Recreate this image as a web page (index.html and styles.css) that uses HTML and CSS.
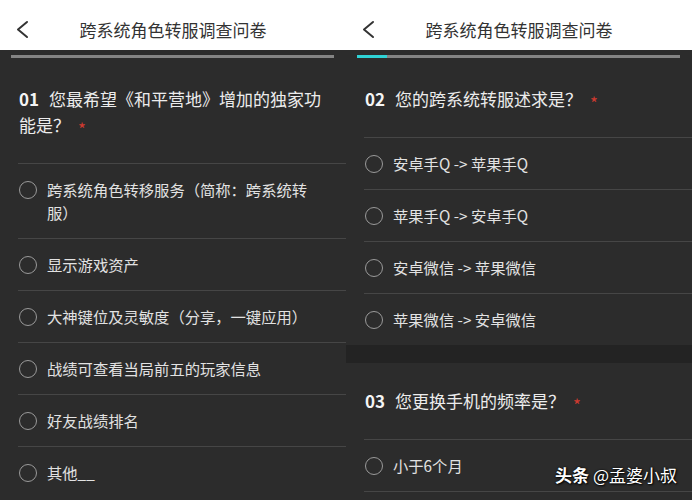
FILE: index.html
```html
<!DOCTYPE html>
<html lang="zh-CN">
<head>
<meta charset="utf-8">
<title>跨系统角色转服调查问卷</title>
<link rel="stylesheet" href="styles.css">
</head>
<body>
<div class="screens">
  <section class="panel">
    <header class="topbar">
      <svg class="back" width="14" height="20" viewBox="0 0 14 20"><polyline points="11,2 2,9.5 11,17" fill="none" stroke="#333" stroke-width="2" stroke-linecap="round" stroke-linejoin="round"/></svg>
      <h1 class="title">跨系统角色转服调查问卷</h1>
      <span></span>
    </header>
    <div class="progress"><div class="track"><div class="fill" style="width:0%"></div></div></div>
    <p class="question"><span class="num">01</span><span class="qtext">您最希望《和平营地》增加的独家功能是？</span><span class="req">*</span></p>
    <ul class="options">
      <li class="option"><span class="radio"></span><span class="label">跨系统角色转移服务（简称：跨系统转服）</span></li>
      <li class="option"><span class="radio"></span><span class="label">显示游戏资产</span></li>
      <li class="option"><span class="radio"></span><span class="label">大神键位及灵敏度（分享，一键应用）</span></li>
      <li class="option"><span class="radio"></span><span class="label">战绩可查看当局前五的玩家信息</span></li>
      <li class="option"><span class="radio"></span><span class="label">好友战绩排名</span></li>
      <li class="option"><span class="radio"></span><span class="label">其他__</span></li>
    </ul>
  </section>
  <section class="panel">
    <header class="topbar">
      <svg class="back" width="14" height="20" viewBox="0 0 14 20"><polyline points="11,2 2,9.5 11,17" fill="none" stroke="#333" stroke-width="2" stroke-linecap="round" stroke-linejoin="round"/></svg>
      <h1 class="title">跨系统角色转服调查问卷</h1>
      <span></span>
    </header>
    <div class="progress"><div class="track"><div class="fill" style="width:9.3%"></div></div></div>
    <p class="question"><span class="num">02</span><span class="qtext">您的跨系统转服述求是？</span><span class="req">*</span></p>
    <ul class="options">
      <li class="option"><span class="radio"></span><span class="label">安卓手Q -&gt; 苹果手Q</span></li>
      <li class="option"><span class="radio"></span><span class="label">苹果手Q -&gt; 安卓手Q</span></li>
      <li class="option"><span class="radio"></span><span class="label">安卓微信 -&gt; 苹果微信</span></li>
      <li class="option"><span class="radio"></span><span class="label">苹果微信 -&gt; 安卓微信</span></li>
    </ul>
    <div class="gap"></div>
    <p class="question question-after-gap"><span class="num">03</span><span class="qtext">您更换手机的频率是？</span><span class="req">*</span></p>
    <ul class="options options-continued">
      <li class="option"><span class="radio"></span><span class="label">小于6个月</span></li>
    </ul>
    <div class="watermark"><b>头条</b> @孟婆小叔</div>
  </section>
</div>
</body>
</html>
```
FILE: styles.css
```css
html, body {
  margin: 0;
  padding: 0;
  background: #2b2b2b;
}
body {
  font-family: "Noto Sans CJK SC", "Noto Sans", sans-serif;
}
.screens {
  display: flex;
  width: 692px;
  height: 500px;
  overflow: hidden;
}
.panel {
  position: relative;
  width: 346px;
  flex: none;
  height: 500px;
  overflow: hidden;
  background: #2c2c2c;
}
.topbar {
  display: grid;
  grid-template-columns: 1fr auto 1fr;
  align-items: center;
  height: 50px;
  box-sizing: border-box;
  padding-top: 9px;
  background: #ffffff;
}
.back {
  display: block;
  margin-left: 16px;
}
.title {
  margin: 0;
  font-size: 17px;
  font-weight: 400;
  color: #333;
  line-height: 22px;
}
.progress {
  padding: 5px 12px 1px 11px;
}
.track {
  height: 3px;
  background: #848484;
}
.fill {
  height: 100%;
  background: #2fd3d6;
}
.question {
  margin: 0;
  padding: 27px 19px 25px 19px;
  font-size: 17px;
  line-height: 26px;
  color: #ececec;
}
.question-after-gap {
  padding-top: 25px;
}
.num {
  font-weight: 700;
  margin-right: 10px;
  color: #f4f4f4;
}
.req {
  display: inline-block;
  margin-left: 8px;
  font-size: 17px;
  line-height: 17px;
  color: #d03a30;
  vertical-align: -4px;
}
.options {
  list-style: none;
  margin: 0;
  padding: 0;
}
.options-continued .option:last-child {
  border-bottom: 1px solid #464646;
}
.option {
  display: flex;
  align-items: flex-start;
  margin-left: 18px;
  padding: 14px 30px 14px 1px;
  border-top: 1px solid #464646;
  font-size: 15.3px;
  line-height: 23px;
  color: #e2e2e2;
}
.radio {
  flex: none;
  width: 18px;
  height: 18px;
  box-sizing: border-box;
  border: 1.5px solid #9a9a9a;
  border-radius: 50%;
  margin-top: 2.5px;
  margin-right: 10px;
}
.label {
  flex: 1;
}
.gap {
  height: 18px;
  background: #232323;
}
.watermark {
  position: absolute;
  right: 15px;
  top: 463px;
  font-size: 17px;
  line-height: 24px;
  color: #ffffff;
  text-shadow: 0 0 2px #000, 1px 1px 2px #000;
}
.watermark b {
  font-weight: 700;
}
```
